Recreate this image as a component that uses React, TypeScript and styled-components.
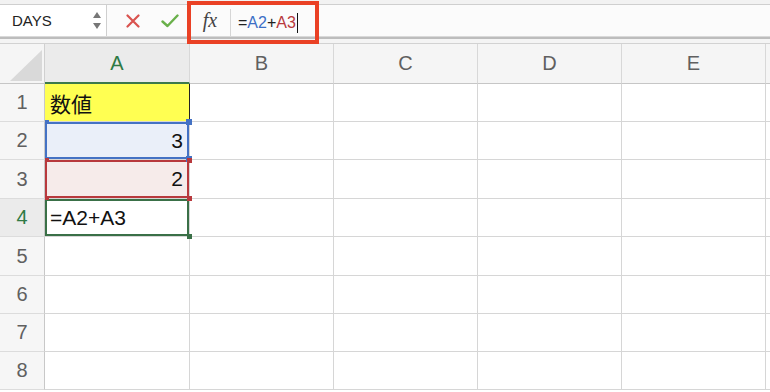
import React from 'react';
import styled, { createGlobalStyle, css } from 'styled-components';

const GlobalStyle = createGlobalStyle`
  html, body { margin: 0; padding: 0; background: #fff; }
  body { font-family: "Liberation Sans", Arial, "Noto Sans CJK JP", sans-serif; }
  * { box-sizing: border-box; }
`;

const Page = styled.div`
  position: relative;
  width: 770px;
  height: 392px;
  overflow: hidden;
  background: #fff;
`;

const TopStrip = styled.div`
  height: 5px;
  background: #f2f2f2;
  border-bottom: 1px solid #cfcfcf;
`;

const Bar = styled.div`
  height: 32px;
  display: flex;
  align-items: stretch;
  background: #fbfbfb;
  border-bottom: 1px solid #d9d9d9;
`;

const NameBox = styled.div`
  width: 107px;
  display: flex;
  align-items: center;
  justify-content: space-between;
  padding: 0 5px 0 12px;
  background: #fff;
  border-right: 1px solid #cfcfcf;
  font-size: 15px;
  color: #222;
`;

const Spinner = styled.div`
  display: flex;
  flex-direction: column;
  gap: 5px;
`;

const Actions = styled.div`
  width: 80px;
  display: flex;
  align-items: center;
  gap: 21px;
  padding-left: 19px;
`;

const Fx = styled.div`
  width: 43px;
  display: flex;
  align-items: center;
  justify-content: center;
  padding-left: 3px;
  font-family: "Liberation Serif", "Times New Roman", serif;
  font-style: italic;
  font-size: 20px;
  color: #444;
`;

const FormulaInput = styled.div`
  flex: 1;
  display: flex;
  align-items: center;
  margin: 4px 0 0;
  padding-left: 7px;
  border-left: 1px solid #d6d6d6;
  font-size: 16px;
  color: #222;
`;

const Ref = styled.span<{ $color: string }>`
  color: ${({ $color }) => $color};
`;

const Caret = styled.span`
  display: inline-block;
  width: 1px;
  height: 20px;
  margin-left: 1px;
  background: #111;
`;

const Divider = styled.div`
  height: 7px;
  background: #f4f4f4;
  border-top: 2px solid #bdbdbd;
  border-bottom: 1px solid #d2d2d2;
`;

const Grid = styled.div`
  display: grid;
  grid-template-columns: 45px 145px 144px 144px 144px 144px 1fr;
  grid-template-rows: 40px 38px 38px 39px 38px 39px 38px 38px 38px;
`;

const Corner = styled.div`
  position: relative;
  background: #f5f5f5;
  border-right: 1px solid #d0d0d0;
  border-bottom: 1px solid #c6c6c6;
`;

const ColHead = styled.div<{ $active?: boolean }>`
  display: flex;
  align-items: center;
  justify-content: center;
  background: ${({ $active }) => ($active ? '#ebebeb' : '#f5f5f5')};
  border-right: 1px solid #d8d8d8;
  border-bottom: ${({ $active }) => ($active ? '2px solid #3c7a4b' : '1px solid #c6c6c6')};
  font-size: 20px;
  color: ${({ $active }) => ($active ? '#2f7a45' : '#606060')};
`;

const RowHead = styled.div<{ $active?: boolean }>`
  display: flex;
  align-items: center;
  justify-content: center;
  background: ${({ $active }) => ($active ? '#ebebeb' : '#f6f6f6')};
  border-right: 1px solid #c8c8c8;
  border-bottom: 1px solid #dcdcdc;
  font-size: 20px;
  color: ${({ $active }) => ($active ? '#2f7a45' : '#606060')};
`;

const Cell = styled.div<{ $bg?: string; $align?: 'left' | 'right'; $ring?: string; $edge?: string }>`
  position: relative;
  display: flex;
  align-items: center;
  justify-content: ${({ $align }) => ($align === 'right' ? 'flex-end' : 'flex-start')};
  padding: 0 6px 0 5px;
  background: ${({ $bg }) => $bg || '#fff'};
  border-right: 1px solid ${({ $edge }) => $edge || '#d6d6d6'};
  border-bottom: 1px solid #d6d6d6;
  font-size: 21px;
  color: #111;
  ${({ $ring }) =>
    $ring &&
    css`
      box-shadow: inset 0 0 0 2px ${$ring};
    `}
`;

const Handle = styled.span<{ $color: string; $pos: 'tl' | 'tr' | 'bl' | 'br'; $size: number }>`
  position: absolute;
  width: ${({ $size }) => $size}px;
  height: ${({ $size }) => $size}px;
  background: ${({ $color }) => $color};
  z-index: 2;
  ${({ $pos, $size }) => ($pos[0] === 't' ? `top: -${$size / 2}px;` : `bottom: -${$size / 2}px;`)}
  ${({ $pos, $size }) => ($pos[1] === 'l' ? `left: 0;` : `right: -${$size / 2}px;`)}
`;

const Annotation = styled.div`
  position: absolute;
  left: 187px;
  top: 1px;
  width: 132px;
  height: 43px;
  border: 4px solid #ea4125;
  pointer-events: none;
`;

const COLS = ['A', 'B', 'C', 'D', 'E', ''];

const Corners: React.FC<{ color: string; big?: boolean }> = ({ color, big }) => (
  <>
    <Handle $color={color} $pos="tl" $size={4} />
    <Handle $color={color} $pos="tr" $size={big ? 6 : 5} />
    <Handle $color={color} $pos="bl" $size={4} />
    <Handle $color={color} $pos="br" $size={big ? 6 : 5} />
  </>
);

const CellA: React.FC<{ row: number }> = ({ row }) => {
  switch (row) {
    case 1:
      return (
        <Cell $bg="#ffff52" $edge="#222">
          数値
        </Cell>
      );
    case 2:
      return (
        <Cell $bg="#eaeff9" $align="right" $ring="#4472c4">
          3
          <Corners color="#4472c4" big />
        </Cell>
      );
    case 3:
      return (
        <Cell $bg="#f6ebea" $align="right" $ring="#b8393d">
          2
          <Corners color="#b8393d" />
        </Cell>
      );
    case 4:
      return (
        <Cell $ring="#3a7047">
          =A2+A3
          <Handle $color="#3a7047" $pos="br" $size={5} />
        </Cell>
      );
    default:
      return <Cell />;
  }
};

export default function App() {
  const rows = [1, 2, 3, 4, 5, 6, 7, 8];
  return (
    <Page>
      <GlobalStyle />
      <TopStrip />
      <Bar>
        <NameBox>
          DAYS
          <Spinner>
            <svg width="8" height="6" viewBox="0 0 8 6">
              <path d="M4 0 L8 6 L0 6 Z" fill="#777" />
            </svg>
            <svg width="8" height="6" viewBox="0 0 8 6">
              <path d="M0 0 L8 0 L4 6 Z" fill="#777" />
            </svg>
          </Spinner>
        </NameBox>
        <Actions>
          <svg width="14" height="14" viewBox="0 0 14 14">
            <path d="M1.5 1.5 L12.5 12.5 M12.5 1.5 L1.5 12.5" stroke="#d9534f" strokeWidth="2.2" strokeLinecap="round" />
          </svg>
          <svg width="18" height="14" viewBox="0 0 18 14">
            <path d="M1.5 7.5 L6.5 12 L16.5 1.5" stroke="#69b04a" strokeWidth="2.4" fill="none" strokeLinecap="round" strokeLinejoin="round" />
          </svg>
        </Actions>
        <Fx>fx</Fx>
        <FormulaInput>
          =<Ref $color="#3d6fc6">A2</Ref>+<Ref $color="#b8393d">A3</Ref>
          <Caret />
        </FormulaInput>
      </Bar>
      <Divider />
      <Grid>
        <Corner>
          <svg width="45" height="40" viewBox="0 0 45 40" style={{ position: 'absolute', inset: 0 }}>
            <path d="M42 6 L42 37 L10 37 Z" fill="#d9d9d9" />
          </svg>
        </Corner>
        {COLS.map((c, i) => (
          <ColHead key={i} $active={c === 'A'}>
            {c}
          </ColHead>
        ))}
        {rows.map((r) => (
          <React.Fragment key={r}>
            <RowHead $active={r === 4}>{r}</RowHead>
            <CellA row={r} />
            {[0, 1, 2, 3, 4].map((k) => (
              <Cell key={k} />
            ))}
          </React.Fragment>
        ))}
      </Grid>
      <Annotation />
    </Page>
  );
}
